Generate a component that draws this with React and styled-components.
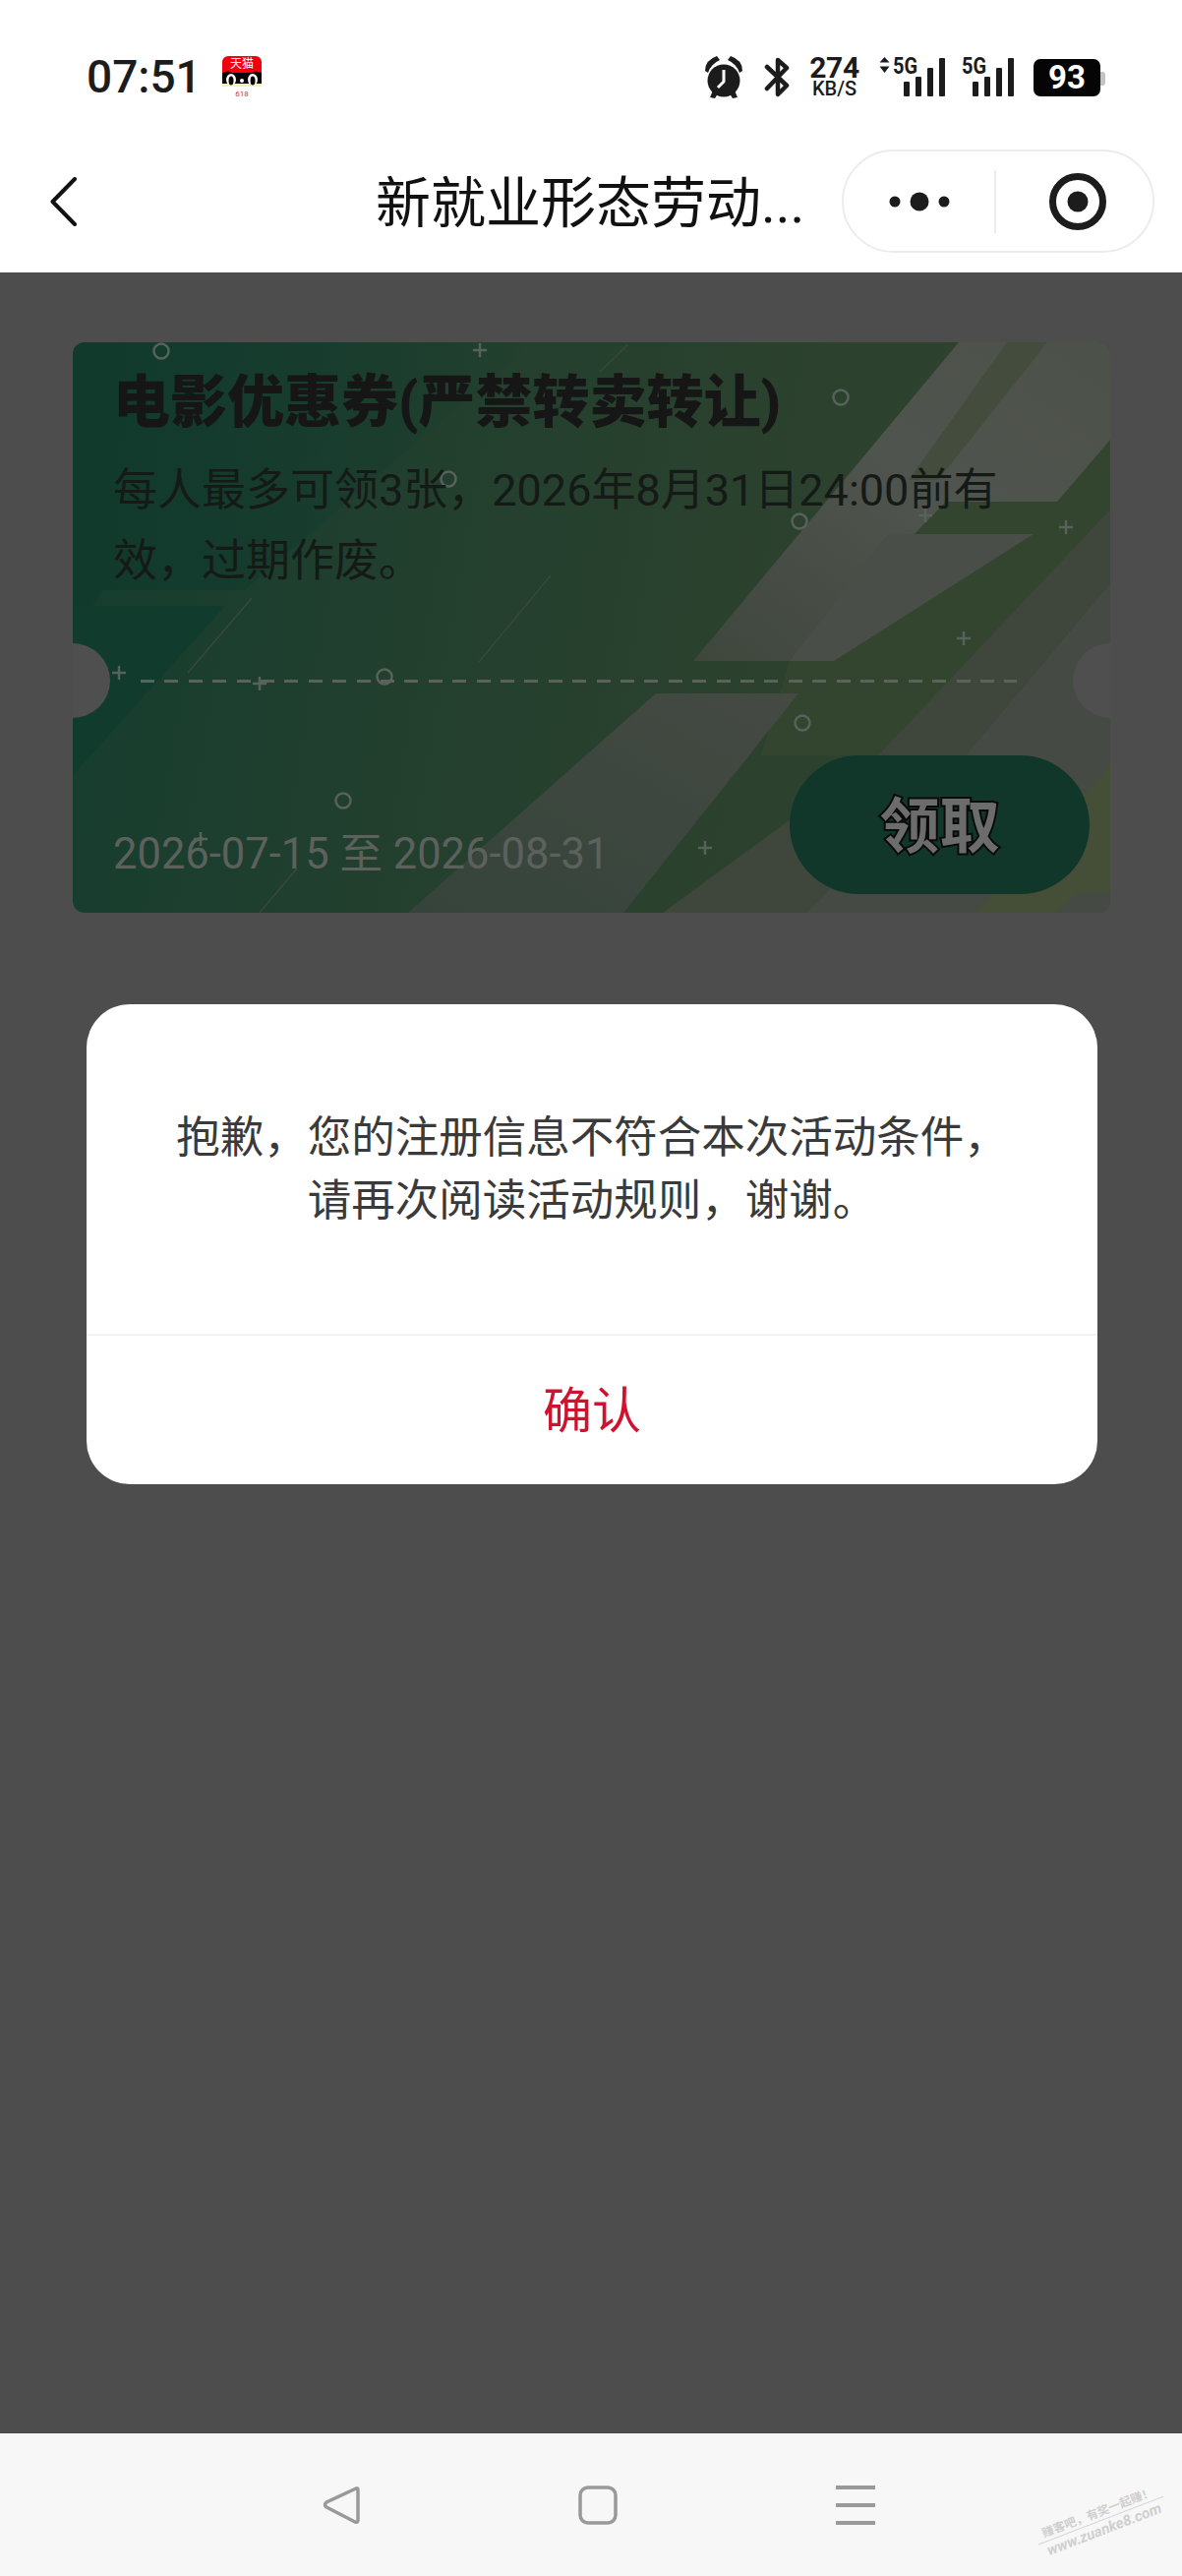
import React from 'react';
import styled, { createGlobalStyle } from 'styled-components';

const GlobalStyle = createGlobalStyle`
html, body {
    margin: 0;
    padding: 0;
    background: #fff;
    font-family: Roboto, "Noto Sans CJK SC", sans-serif;
}
`

const Page = styled.div`
width: 1202px;
height: 2619px;
display: flex;
flex-direction: column;
overflow: hidden;
`

/* status bar */
const StatusBar = styled.div`
height: 152px;
box-sizing: border-box;
padding: 57px 78px 0 88px;
display: flex;
justify-content: space-between;
align-items: flex-start;
background: #fff;
`
const StatusLeft = styled.div`
display: flex;
align-items: center;
height: 42px;
gap: 21px;
`
const Time = styled.span`
font-size: 46px;
font-weight: 500;
line-height: 42px;
color: #1c1c1c;
`
const StatusRight = styled.div`
display: flex;
align-items: flex-start;
gap: 19px;
height: 42px;
`
const NetSpeed = styled.div`
width: 53px;
display: flex;
flex-direction: column;
align-items: center;
color: #1c1c1c;
`
const NetValue = styled.span`
font-size: 30px;
font-weight: 700;
line-height: 24px;
letter-spacing: -0.3px;
`
const NetUnit = styled.span`
font-size: 20px;
font-weight: 500;
line-height: 18px;
`
const SignalIcon = styled.svg`
display: block;
margin-top: -4px;
margin-left: ${p => p.$nudge || 0}px;
`
const Battery = styled.div`
position: relative;
width: 68px;
height: 38px;
margin: 3px 5px 0 1px;
border-radius: 7px;
background: #050505;
color: #fff;
font-size: 33px;
font-weight: 700;
line-height: 38px;
text-align: center;
&::after {
    content: '';
    position: absolute;
    right: -5px;
    top: 13px;
    width: 5px;
    height: 14px;
    border-radius: 0 3px 3px 0;
    background: #c4c4c4;
}
`

/* title bar */
const TitleBar = styled.div`
height: 125px;
box-sizing: border-box;
padding: 0 28px 20px 51px;
display: flex;
align-items: center;
background: #fff;
`
const TitleText = styled.div`
margin: 5px 0 0 304px;
font-size: 56px;
line-height: 70px;
color: #111;
white-space: nowrap;
`
const Capsule = styled.div`
margin-left: auto;
width: 318px;
height: 105px;
box-sizing: border-box;
border: 2px solid #ececec;
border-radius: 53px;
display: flex;
align-items: center;
background: #fff;
`
const CapsuleCell = styled.div`
flex: 1;
display: flex;
align-items: center;
justify-content: center;
padding-left: ${p => p.$shift || 0}px;
`
const CapsuleDivider = styled.div`
width: 2px;
height: 64px;
background: #ececec;
`

/* masked content */
const Mask = styled.div`
flex: 1;
background: #4d4d4d;
padding-top: 71px;
`
const Ticket = styled.div`
position: relative;
width: 1055px;
height: 580px;
margin-left: 74px;
border-radius: 12px;
overflow: hidden;
background: linear-gradient(100deg, #143d2e 0%, #213f2e 30%, #2a412e 60%, #32452f 100%);
`
const TicketArt = styled.svg`
position: absolute;
inset: 0;
`
const Notch = styled.div`
position: absolute;
top: 306px;
${p => p.$side}: -38px;
width: 76px;
height: 76px;
border-radius: 50%;
background: #4f4f4f;
`
const TicketTop = styled.div`
position: relative;
height: 343px;
box-sizing: border-box;
padding: 25px 41px 0;
`
const TicketTitle = styled.div`
font-size: 58px;
font-weight: 900;
line-height: 72px;
color: #161616;
white-space: nowrap;
`
const TicketDesc = styled.div`
margin-top: 18px;
width: 960px;
font-size: 45px;
line-height: 72px;
color: #151a17;
`
const DashLine = styled.div`
position: relative;
height: 3px;
margin: 0 95px 0 69px;
background: repeating-linear-gradient(90deg, #5b625b 0 14px, transparent 14px 24.4px);
`
const TicketBottom = styled.div`
position: relative;
height: 234px;
box-sizing: border-box;
padding: 74px 21px 0 41px;
display: flex;
justify-content: space-between;
align-items: flex-start;
`
const DateRange = styled.div`
margin-top: 74px;
font-size: 43.5px;
line-height: 54px;
color: #5c615d;
white-space: nowrap;
`
const ClaimButton = styled.div`
width: 305px;
height: 141px;
box-sizing: border-box;
padding-bottom: 7px;
border-radius: 71px;
background: #10372a;
display: flex;
align-items: center;
justify-content: center;
font-size: 61px;
font-weight: 700;
color: #6c6c6c;
-webkit-text-stroke: 4px #0a0a0a;
paint-order: stroke fill;
`

/* dialog */
const Dialog = styled.div`
width: 1028px;
height: 488px;
margin: 93px 0 0 88px;
border-radius: 44px;
background: #fff;
display: flex;
flex-direction: column;
`
const DialogBody = styled.div`
height: 335px;
display: flex;
align-items: center;
justify-content: center;
text-align: center;
font-size: 44.5px;
line-height: 64px;
color: #3a3a3a;
border-bottom: 2px solid #f3f3f3;
`
const DialogAction = styled.div`
flex: 1;
padding-bottom: 7px;
display: flex;
align-items: center;
justify-content: center;
font-size: 50px;
color: #d0122f;
`

/* navigation bar */
const NavBar = styled.div`
position: relative;
height: 145px;
box-sizing: border-box;
padding-left: 328px;
display: flex;
align-items: center;
gap: 222px;
background: #f7f7f7;
`
const Watermark = styled.div`
position: absolute;
left: 1052px;
top: 73px;
width: 136px;
transform: rotate(-21deg);
text-align: center;
color: #cfcfcf;
`
const WatermarkTop = styled.div`
font-size: 12px;
font-weight: 700;
line-height: 15px;
white-space: nowrap;
border-bottom: 1px solid #d6d6d6;
`
const WatermarkUrl = styled.div`
font-size: 15px;
font-weight: 700;
font-style: italic;
line-height: 18px;
white-space: nowrap;
`

const TmallIcon = () => (
    <svg width="40" height="42" viewBox="0 0 40 42">
        <path d="M6 0H34A6 6 0 0 1 40 6V27H0V6A6 6 0 0 1 6 0Z" fill="#f2000e" />
        <path d="M0 17Q6 14 10 17H30Q34 14 40 17V30H0Z" fill="#0b0606" />
        <rect x="0" y="28" width="40" height="3" fill="#f5efb0" />
        <ellipse cx="9" cy="24" rx="5" ry="6" fill="#fff" />
        <ellipse cx="9" cy="25" rx="2.5" ry="4.5" fill="#0b0606" />
        <ellipse cx="31" cy="24" rx="5" ry="6" fill="#fff" />
        <ellipse cx="31" cy="25" rx="2.5" ry="4.5" fill="#0b0606" />
        <circle cx="20" cy="25" r="2" fill="#fff" />
        <text x="20" y="12" textAnchor="middle" fontSize="12" fill="#fff">天猫</text>
        <text x="20" y="41" textAnchor="middle" fontSize="8" fill="#d33">618</text>
    </svg>
)

const AlarmIcon = () => (
    <svg width="42" height="44" viewBox="0 0 42 44">
        <circle cx="20" cy="25" r="16.5" fill="#1c1c1c" />
        <path d="M1 15Q1 4 13 0L16 4Q7 8 4 17Z" fill="#1c1c1c" />
        <path d="M39 15Q39 4 27 0L24 4Q33 8 36 17Z" fill="#1c1c1c" />
        <path d="M6 42L9 35L14 38L11 43Z M34 42L31 35L26 38L29 43Z" fill="#1c1c1c" />
        <path d="M20 14V26L14 32" fill="none" stroke="#fff" strokeWidth="3" />
    </svg>
)

const BluetoothIcon = () => (
    <svg width="26" height="44" viewBox="0 0 26 44">
        <path d="M3 11L23 30L14 39V4L23 12L3 33" fill="none" stroke="#1c1c1c" strokeWidth="4.5" strokeLinejoin="round" strokeLinecap="round" />
    </svg>
)

const barTops = [26, 21, 12, 2]

const Signal = ({ arrows, nudge }) => {
    const left = arrows ? 25 : 11
    return (
        <SignalIcon $nudge={nudge} width={left + 42} height="46" viewBox={`0 -4 ${left + 42} 46`}>
            {arrows && <path d="M5.5 1L10.5 6.5H0.5Z M5.5 17L10.5 10.5H0.5Z" fill="#1c1c1c" />}
            <text x={arrows ? 14 : 0} y="18" fontSize="23" fontWeight="700" fontFamily="Roboto, sans-serif" textLength="25" lengthAdjust="spacingAndGlyphs" fill="#1c1c1c">5G</text>
            {barTops.map((top, i) => (
                <rect key={i} x={left + i * 12} y={top} width="6" height={41 - top} rx="1" fill="#1c1c1c" />
            ))}
        </SignalIcon>
    )
}

const BackIcon = () => (
    <svg width="27" height="50" viewBox="0 0 27 50">
        <path d="M25 2L2.5 25L25 48" fill="none" stroke="#111" strokeWidth="4" strokeLinecap="round" strokeLinejoin="round" />
    </svg>
)

const MoreIcon = () => (
    <svg width="66" height="22" viewBox="0 0 66 22">
        <circle cx="8" cy="11" r="5.5" fill="#1c1c1c" />
        <circle cx="33" cy="11" r="9.5" fill="#1c1c1c" />
        <circle cx="58" cy="11" r="5.5" fill="#1c1c1c" />
    </svg>
)

const TargetIcon = () => (
    <svg width="60" height="60" viewBox="0 0 60 60">
        <circle cx="30" cy="30" r="25.5" fill="none" stroke="#1c1c1c" strokeWidth="7" />
        <circle cx="30" cy="30" r="10.5" fill="#1c1c1c" />
    </svg>
)

const rings = [[90, 9], [382, 139], [317, 340], [275, 466], [781, 56], [739, 182], [742, 387]]
const crosses = [[414, 8], [47, 336], [190, 347], [130, 505], [867, 176], [1010, 188], [906, 301], [643, 514]]

const TicketBackground = () => (
    <TicketArt width="1055" height="580" viewBox="0 0 1055 580">
        <defs>
            <linearGradient id="darkFade" x1="0" y1="0" x2="1" y2="0">
                <stop offset="0" stopColor="#113a2d" />
                <stop offset="1" stopColor="#113a2d" stopOpacity="0" />
            </linearGradient>
            <linearGradient id="lightA" x1="0" y1="1" x2="1" y2="0">
                <stop offset="0" stopColor="#3f473d" />
                <stop offset="0.55" stopColor="#50544e" />
                <stop offset="1" stopColor="#4c5149" />
            </linearGradient>
            <linearGradient id="lightB" x1="0" y1="1" x2="1" y2="0">
                <stop offset="0" stopColor="#35443a" />
                <stop offset="1" stopColor="#454a43" />
            </linearGradient>
        </defs>
        <polygon points="0,0 468,0 175,252 31,252 0,300" fill="url(#darkFade)" />
        <polygon points="0,268 155,268 0,440" fill="#113b2d" />
        <polygon points="729,324 888,162 1001,162 1055,99 1055,170 819,420 700,420" fill="#33452f" />
        <polygon points="631,324 901,0 1055,0 1055,99 1001,162 888,162 729,324" fill="url(#lightA)" />
        <polygon points="950,0 991,0 880,140 850,140" fill="#434c3d" />
        <polygon points="729,324 829,195 977,195 774,324" fill="#4a4e48" />
        <polygon points="341,580 593,357 738,357 560,580" fill="url(#lightB)" />
        <polygon points="600,580 746,580 908,420 1055,245 1055,170 819,420" fill="#3f473d" />
        <polygon points="746,580 908,420 1055,245 1055,580" fill="#464a45" />
        <polygon points="918,580 1055,430 1055,560 1021,560 1000,580" fill="#454f37" />
        <path d="M117 336L182 260M413 325L486 237M190 580L228 535M536 30L564 3" stroke="#39483b" strokeWidth="1.5" />
        {rings.map(([x, y]) => (
            <circle key={`${x}-${y}`} cx={x} cy={y} r="7.5" fill="none" stroke="#56625a" strokeWidth="2.5" />
        ))}
        {crosses.map(([x, y]) => (
            <path key={`${x}-${y}`} d={`M${x - 7} ${y}H${x + 7}M${x} ${y - 7}V${y + 7}`} stroke="#56625a" strokeWidth="2.5" />
        ))}
    </TicketArt>
)

const NavBack = () => (
    <svg width="38" height="40" viewBox="0 0 38 40">
        <path d="M34 3Q36 2 36 5V35Q36 38 33 37L4 22Q1 20 4 17Z" fill="none" stroke="#999" strokeWidth="3.5" strokeLinejoin="round" />
    </svg>
)

const NavHome = () => (
    <svg width="40" height="40" viewBox="0 0 40 40">
        <rect x="2" y="2" width="36" height="36" rx="8" fill="none" stroke="#999" strokeWidth="3.5" />
    </svg>
)

const NavMenu = () => (
    <svg width="40" height="40" viewBox="0 0 40 40">
        <path d="M0 2H40M0 20H40M0 38H40" stroke="#999" strokeWidth="4" />
    </svg>
)

function App() {
    return (
        <Page>
            <GlobalStyle />
            <StatusBar>
                <StatusLeft>
                    <Time>07:51</Time>
                    <TmallIcon />
                </StatusLeft>
                <StatusRight>
                    <AlarmIcon />
                    <BluetoothIcon />
                    <NetSpeed>
                        <NetValue>274</NetValue>
                        <NetUnit>KB/S</NetUnit>
                    </NetSpeed>
                    <Signal arrows />
                    <Signal nudge={-2} />
                    <Battery>93</Battery>
                </StatusRight>
            </StatusBar>
            <TitleBar>
                <BackIcon />
                <TitleText>新就业形态劳动...</TitleText>
                <Capsule>
                    <CapsuleCell><MoreIcon /></CapsuleCell>
                    <CapsuleDivider />
                    <CapsuleCell $shift={6}><TargetIcon /></CapsuleCell>
                </Capsule>
            </TitleBar>
            <Mask>
                <Ticket>
                    <TicketBackground />
                    <Notch $side="left" />
                    <Notch $side="right" />
                    <TicketTop>
                        <TicketTitle>电影优惠券(严禁转卖转让)</TicketTitle>
                        <TicketDesc>每人最多可领3张，2026年8月31日24:00前有效，过期作废。</TicketDesc>
                    </TicketTop>
                    <DashLine />
                    <TicketBottom>
                        <DateRange>2026-07-15 至 2026-08-31</DateRange>
                        <ClaimButton>领取</ClaimButton>
                    </TicketBottom>
                </Ticket>
                <Dialog>
                    <DialogBody>
                        <div>抱歉，您的注册信息不符合本次活动条件，<br />请再次阅读活动规则，谢谢。</div>
                    </DialogBody>
                    <DialogAction>确认</DialogAction>
                </Dialog>
            </Mask>
            <NavBar>
                <NavBack />
                <NavHome />
                <NavMenu />
                <Watermark>
                    <WatermarkTop>赚客吧，有奖一起赚！</WatermarkTop>
                    <WatermarkUrl>www.zuanke8.com</WatermarkUrl>
                </Watermark>
            </NavBar>
        </Page>
    )
}

export default App
